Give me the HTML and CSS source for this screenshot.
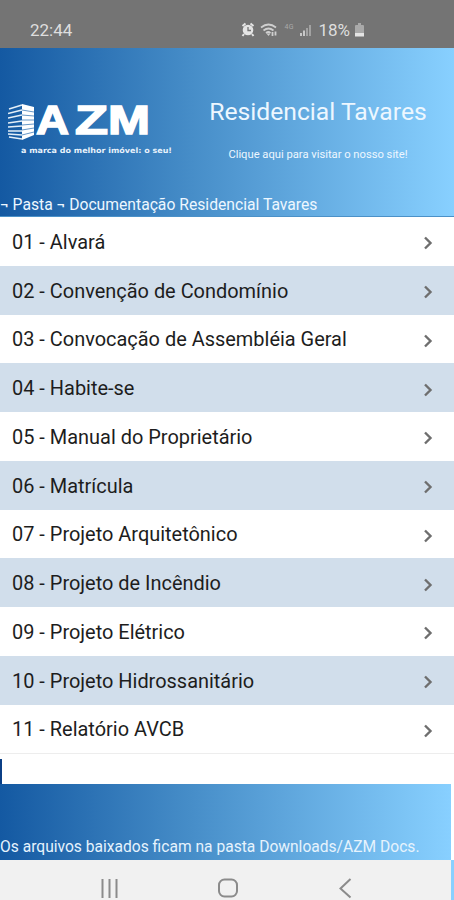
FILE: index.html
```html
<!DOCTYPE html>
<html lang="pt-BR">

<head>
    <meta charset="utf-8">
    <title>AZM Docs</title>
    <link rel="stylesheet" href="styles.css">
</head>

<body>
    <div class="status-bar">
        <span class="clock">22:44</span>
        <svg class="status-icons" width="76" height="18" viewBox="0 0 76 18">
            <!-- alarm -->
            <circle cx="8" cy="9" r="5.3" fill="#e4e4e4"/>
            <path d="M2.5 5l3-2.500M13.500 5l-3-2.500M4 13l-1.500 2M12 13l1.500 2" stroke="#e4e4e4" stroke-width="2"/>
            <path d="M8 6v3.500h3" fill="none" stroke="#747474" stroke-width="1.300"/>
            <!-- wifi -->
            <g fill="none" stroke="#cfcfcf" stroke-width="1.700">
                <path d="M21 6.500q7.500-6 15 0M23.500 9.500q5-4 10 0M26 12q2.500-2 4.500 0"/>
                <path d="M32.500 11v4M35.500 10.500v4" stroke-width="1.800"/>
            </g>
            <path d="M26.500 12.500h4l-2 2.500z" fill="#cfcfcf"/>
            <text class="network" x="44.500" y="7.500" textLength="9">4G</text>
            <!-- signal -->
            <path d="M61 12v3M64 9.500v5.500" stroke="#c8c8c8" stroke-width="2"/>
            <path d="M67 7v8M70 4v11" stroke="#a2a2a2" stroke-width="2"/>
        </svg>
        <span class="percent">18%</span>
        <svg class="battery" width="9" height="14" viewBox="0 0 9 14">
            <path d="M3 0h3v2h2q1 0 1 1v10H0V3q0-1 1-1h2z" fill="#a9a9a9"/>
            <path d="M0 10h9v3.500H0z" fill="#e4e4e4"/>
        </svg>
    </div>

    <header class="header">
        <div class="header-main">
            <svg class="logo" width="170" height="66" viewBox="0 -10 170 66">
                <path d="M14 1l12 3v28l-12 5z" fill="#fff"/>
                <path d="M14 2L1 6M14 7L0 10.500M14 12L0 15M14 18L0 20M14 23L0 24M14 28L0 28M14 32L0 31M14 36L1 34" stroke="#e4eff8" stroke-width="1.500"/>
                <path d="M14 7l12 2M14 12l12 1M14 17l12 0M14 22l12-1M14 27l12-2M14 32l12-3" stroke="#6798c8" stroke-width="1"/>
                <text class="logo-name" y="31"><tspan x="28" textLength="33" lengthAdjust="spacingAndGlyphs">A</tspan><tspan x="67" textLength="33" lengthAdjust="spacingAndGlyphs">Z</tspan><tspan x="100" textLength="42" lengthAdjust="spacingAndGlyphs">M</tspan></text>
                <text class="logo-slogan" x="13" y="49.500" textLength="151" lengthAdjust="spacingAndGlyphs">a marca do melhor imóvel: o seu!</text>
            </svg>
            <div class="header-text">
                <div class="header-title">Residencial Tavares</div>
                <div class="header-link">Clique aqui para visitar o nosso site!</div>
            </div>
        </div>
        <div class="breadcrumb">¬ Pasta ¬ Documentação Residencial Tavares</div>
    </header>

    <ul class="docs">
        <li><span>01 - Alvará</span><svg class="arrow" viewBox="0 0 10 14"><path d="M2 1.500L7.500 7 2 12.500"/></svg></li>
        <li><span>02 - Convenção de Condomínio</span><svg class="arrow" viewBox="0 0 10 14"><path d="M2 1.500L7.500 7 2 12.500"/></svg></li>
        <li><span>03 - Convocação de Assembléia Geral</span><svg class="arrow" viewBox="0 0 10 14"><path d="M2 1.500L7.500 7 2 12.500"/></svg></li>
        <li><span>04 - Habite-se</span><svg class="arrow" viewBox="0 0 10 14"><path d="M2 1.500L7.500 7 2 12.500"/></svg></li>
        <li><span>05 - Manual do Proprietário</span><svg class="arrow" viewBox="0 0 10 14"><path d="M2 1.500L7.500 7 2 12.500"/></svg></li>
        <li><span>06 - Matrícula</span><svg class="arrow" viewBox="0 0 10 14"><path d="M2 1.500L7.500 7 2 12.500"/></svg></li>
        <li><span>07 - Projeto Arquitetônico</span><svg class="arrow" viewBox="0 0 10 14"><path d="M2 1.500L7.500 7 2 12.500"/></svg></li>
        <li><span>08 - Projeto de Incêndio</span><svg class="arrow" viewBox="0 0 10 14"><path d="M2 1.500L7.500 7 2 12.500"/></svg></li>
        <li><span>09 - Projeto Elétrico</span><svg class="arrow" viewBox="0 0 10 14"><path d="M2 1.500L7.500 7 2 12.500"/></svg></li>
        <li><span>10 - Projeto Hidrossanitário</span><svg class="arrow" viewBox="0 0 10 14"><path d="M2 1.500L7.500 7 2 12.500"/></svg></li>
        <li><span>11 - Relatório AVCB</span><svg class="arrow" viewBox="0 0 10 14"><path d="M2 1.500L7.500 7 2 12.500"/></svg></li>
    </ul>

    <div class="spacer"></div>

    <footer class="footer">Os arquivos baixados ficam na pasta Downloads/AZM Docs.</footer>

    <nav class="nav-bar">
        <svg width="451" height="40" viewBox="0 0 451 40" fill="none" stroke="#8b8b8b" stroke-width="2">
            <path d="M102.500 19v19M109.500 19v19M116.500 19v19"/>
            <rect x="219" y="19.500" width="18" height="17" rx="5.500"/>
            <path d="M350.500 19l-10 9.500 10 9"/>
        </svg>
    </nav>
</body>

</html>
```

FILE: styles.css
```css
* {
    box-sizing: border-box;
}

html, body {
    margin: 0;
    padding: 0;
    height: 900px;
    overflow: hidden;
}

body {
    font-family: Roboto, sans-serif;
    background: #fff;
    display: flex;
    flex-direction: column;
}

.status-bar {
    height: 48px;
    flex: none;
    background: #747474;
    color: #dedede;
    display: flex;
    align-items: center;
    padding: 11px 90px 0 30px;
    font-size: 17px;
}

.status-icons {
    margin-left: auto;
    margin-right: 2px;
}

.network {
    font-size: 7px;
    fill: #aaa;
}

.battery {
    margin-left: 5px;
}

.header {
    height: 169px;
    flex: none;
    display: flex;
    flex-direction: column;
    color: #edf7ff;
    background: linear-gradient(90deg, #1459a2, #468dc8 42%, #88d0ff);
    border-bottom: 1px solid #4b91c8;
}

.header-main {
    display: flex;
    flex: 1;
    padding-left: 8px;
}

.logo {
    margin-top: 45px;
    flex: none;
}

.logo-name {
    font-family: "Liberation Sans", sans-serif;
    font-size: 40px;
    font-weight: bold;
    fill: #fff;
    stroke: #fff;
    stroke-width: 1.5px;
}

.logo-slogan {
    font-family: "DejaVu Sans", sans-serif;
    font-size: 7.5px;
    font-weight: bold;
    fill: #e8f2fb;
}

.header-text {
    flex: 1;
    padding: 49px 3px 0 0;
    text-align: center;
    margin-left: 7px;
    white-space: nowrap;
}

.header-title {
    font-size: 24.7px;
    line-height: 30px;
}

.header-link {
    margin-top: 21px;
    font-size: 11.2px;
    line-height: 14px;
}

.breadcrumb {
    height: 24px;
    padding-top: 1px;
    font-size: 15.7px;
    line-height: 24px;
    white-space: nowrap;
}

.docs {
    list-style: none;
    margin: 0;
    padding: 0;
    flex: none;
    border-bottom: 1px solid #ededed;
}

.docs li {
    height: 48.75px;
    padding: 1px 21px 0 12px;
    display: flex;
    align-items: center;
    justify-content: space-between;
    font-size: 19.95px;
    color: #1d1d1d;
}

.docs li:nth-child(even) {
    background: #d1deeb;
}

.arrow {
    width: 10px;
    height: 14px;
    margin-top: 3px;
    fill: none;
    stroke: #6e6e6e;
    stroke-width: 2.4;
}

.spacer {
    height: 30px;
    flex: none;
    background: linear-gradient(#0b3f86, #0b3f86) 0 5px / 2px 25px no-repeat;
}

.footer {
    height: 76px;
    flex: none;
    margin-right: 3px;
    padding-top: 53px;
    background: linear-gradient(90deg, #1459a2, #468dc8 42%, #88d0ff);
    color: #e6f3fd;
    font-size: 15.6px;
    line-height: 20px;
    white-space: nowrap;
}

.nav-bar {
    height: 40px;
    flex: none;
    background: #f1f1f1;
    border-right: 3px solid #88d0ff;
}

.nav-bar svg {
    display: block;
}
```
